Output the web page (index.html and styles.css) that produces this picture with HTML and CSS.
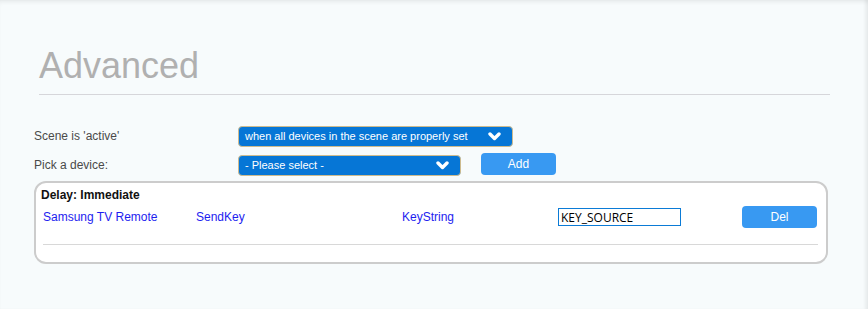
FILE: index.html
```html
<!DOCTYPE html>
<html lang="en">
<head>
  <meta charset="UTF-8">
  <title>Scene - Advanced</title>
  <link rel="stylesheet" href="styles.css">
</head>
<body>
  <div class="panel">
    <h1 class="title">Advanced</h1>

    <div class="form">
      <div class="form-row">
        <label>Scene is 'active'</label>
        <div class="select wide">
          <span>when all devices in the scene are properly set</span>
          <svg class="chev" width="13" height="9" viewBox="0 0 13 9"><path d="M2 2 L6.5 6.5 L11 2" fill="none" stroke="#fff" stroke-width="3.4" stroke-linecap="round" stroke-linejoin="round"/></svg>
        </div>
      </div>
      <div class="form-row">
        <label>Pick a device:</label>
        <div class="select narrow">
          <span>- Please select -</span>
          <svg class="chev" width="13" height="9" viewBox="0 0 13 9"><path d="M2 2 L6.5 6.5 L11 2" fill="none" stroke="#fff" stroke-width="3.4" stroke-linecap="round" stroke-linejoin="round"/></svg>
        </div>
        <button class="btn add">Add</button>
      </div>
    </div>

    <div class="actions">
      <div class="delay">Delay: Immediate</div>
      <div class="action-row">
        <span class="link">Samsung TV Remote</span>
        <span class="link">SendKey</span>
        <span class="link">KeyString</span>
        <input class="value" type="text" value="KEY_SOURCE">
        <button class="btn del">Del</button>
      </div>
      <div class="sep"></div>
    </div>
  </div>
</body>
</html>
```

FILE: styles.css
```css
* {
  box-sizing: border-box;
}

body {
  margin: 0;
  background: #f7fbfc;
  font-family: 'Liberation Sans', Arial, sans-serif;
}

.panel {
  height: 309px;
  padding: 0 38px 0 34px;
  box-shadow: inset 0 4px 4px -2px rgba(0,0,0,0.07), inset -4px 0 3px -1px rgba(0,0,0,0.06);
}

.title {
  margin: 0 0 0 5px;
  padding-top: 47px;
  padding-bottom: 10px;
  font-size: 36px;
  line-height: 37px;
  font-weight: normal;
  color: #b0b0b0;
  border-bottom: 1px solid #d6d6da;
}

.form {
  padding-top: 31px;
  display: flex;
  flex-direction: column;
  gap: 9px;
}

.form-row {
  display: flex;
  align-items: center;
  height: 20px;
}

.form-row label {
  width: 204px;
  font-size: 12px;
  color: #4a4a4a;
}

.select {
  height: 21px;
  display: flex;
  align-items: center;
  justify-content: space-between;
  padding: 0 11px 0 6px;
  background: #0676d6;
  border: 1px solid #cdbb8e;
  border-radius: 4px;
  color: #fff;
  font-size: 11px;
}

.select.wide {
  width: 275px;
}

.select.narrow {
  width: 223px;
}

.btn {
  background: #3899f2;
  color: #fff;
  border: none;
  border-radius: 4px;
  font-family: 'Liberation Sans', Arial, sans-serif;
  font-size: 12px;
  width: 75px;
  height: 22px;
  padding: 0;
}

.btn.add {
  margin-left: 20px;
  margin-top: -2px;
}

.actions {
  margin-top: 6px;
  width: 794px;
  height: 83px;
  background: #fff;
  border: 2px solid #cccccc;
  border-radius: 12px;
  padding: 5px 8px 0 5px;
}

.delay {
  font-size: 12px;
  font-weight: bold;
  color: #111;
}

.action-row {
  display: grid;
  grid-template-columns: 153px 206px 156px 184px 75px;
  align-items: center;
  margin-left: 2px;
  margin-top: 4px;
  height: 22px;
}

.link {
  color: #1d1df0;
  font-size: 12px;
}

.value {
  width: 123px;
  height: 18px;
  border: 1px solid #0b7bd6;
  padding: 0 2px;
  font-family: 'Open Sans', sans-serif;
  font-size: 12px;
  color: #000;
  background: #fff;
  outline: none;
}

.sep {
  margin: 16px 0 0 2px;
  border-top: 1px solid #d8d8d8;
}
```
